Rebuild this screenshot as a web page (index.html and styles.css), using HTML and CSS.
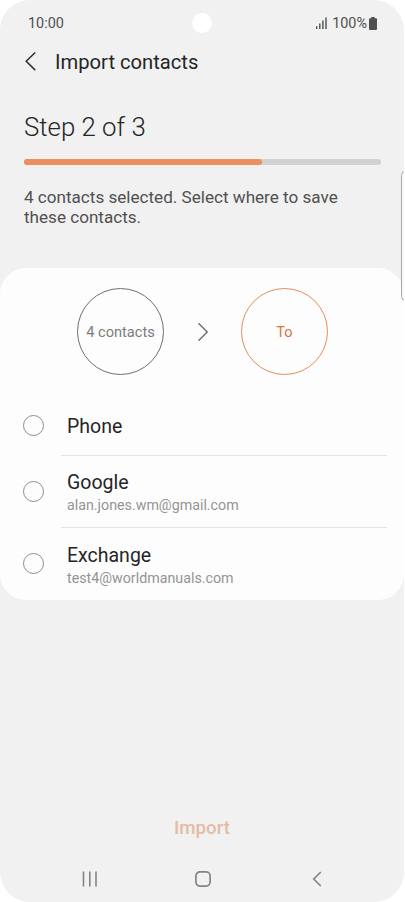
FILE: index.html
```html
<!DOCTYPE html>
<html lang="en">
<head>
    <meta charset="UTF-8">
    <meta name="viewport" content="width=device-width, initial-scale=1.0">
    <title>Import contacts</title>
    <link rel="stylesheet" href="styles.css">
</head>
<body>
    <div class="phone">
        <div class="status-bar">
            <span class="time">10:00</span>
            <span class="camera"></span>
            <div class="status-right">
                <svg class="signal" width="11" height="12" viewBox="0 0 11 12">
                    <path d="M.7 9.300V12M3.800 6.500V12M6.900 3.500V12M10 .5V12" stroke="#505050" stroke-width="1.400"/>
                </svg>
                <span class="percent">100%</span>
                <svg class="battery" width="8" height="13" viewBox="0 0 8 13">
                    <path d="M2.300 0h3.400v1.300H7q1 0 1 1V12q0 1-1 1H1q-1 0-1-1V2.300q0-1 1-1h1.300z" fill="#505050"/>
                </svg>
            </div>
        </div>

        <div class="title-bar">
            <svg width="12" height="20" viewBox="0 0 12 20">
                <path d="M10.200 .5L1.200 9.300l9 8.800" fill="none" stroke="#303030" stroke-width="1.500"/>
            </svg>
            <h1>Import contacts</h1>
        </div>

        <div class="intro">
            <h2>Step 2 of 3</h2>
            <div class="progress"><div class="progress-fill" style="width: 66.667%"></div></div>
            <p>4 contacts selected. Select where to save these contacts.</p>
        </div>

        <div class="card">
            <div class="transfer">
                <div class="circle">4 contacts</div>
                <svg width="11" height="20" viewBox="0 0 11 20">
                    <path d="M1.500 1.300L10.200 10 1.500 18.700" fill="none" stroke="#707070" stroke-width="1.500"/>
                </svg>
                <div class="circle circle-to">To</div>
            </div>
            <div class="option option-phone">
                <span class="radio"></span>
                <div class="option-text">
                    <div class="name">Phone</div>
                </div>
            </div>
            <div class="option">
                <span class="radio"></span>
                <div class="option-text">
                    <div class="name">Google</div>
                    <div class="email">alan.jones.wm@gmail.com</div>
                </div>
            </div>
            <div class="option">
                <span class="radio"></span>
                <div class="option-text">
                    <div class="name">Exchange</div>
                    <div class="email">test4@worldmanuals.com</div>
                </div>
            </div>
        </div>

        <div class="import">Import</div>

        <div class="nav-bar">
            <svg width="16" height="16" viewBox="0 0 16 16">
                <path d="M1.500.5v15M7.800.5v15M14 .5v15" stroke="#848484" stroke-width="1.600"/>
            </svg>
            <svg width="16" height="16" viewBox="0 0 16 16">
                <rect x=".9" y=".9" width="14.200" height="14.200" rx="4" fill="none" stroke="#848484" stroke-width="1.700"/>
            </svg>
            <svg width="16" height="16" viewBox="0 0 16 16">
                <path d="M11.800 1L4.800 8l7 7" fill="none" stroke="#848484" stroke-width="1.700"/>
            </svg>
        </div>

        <div class="edge-handle"></div>
    </div>
</body>
</html>
```

FILE: styles.css
```css
body {
    margin: 0;
    background-color: #fff;
    font-family: Roboto, Arial, sans-serif;
    color: #252525;
}
svg {
    display: block;
    flex: none;
}
h1, h2, p {
    margin: 0;
    font-weight: 400;
}
.phone {
    position: relative;
    display: flex;
    flex-direction: column;
    width: 404px;
    height: 902px;
    background-color: #f1f1f1;
    border-radius: 30px;
    overflow: hidden;
}
.status-bar {
    display: grid;
    grid-template-columns: 164px 20px 1fr;
    align-items: center;
    height: 46px;
    padding: 0 27px 0 28px;
    font-size: 14.4px;
    color: #505050;
}
.camera {
    width: 20px;
    height: 20px;
    border-radius: 50%;
    background-color: #fff;
}
.status-right {
    display: flex;
    align-items: center;
    justify-content: flex-end;
}
.percent {
    margin: 0 2px 0 5px;
}
.title-bar {
    display: flex;
    align-items: center;
    gap: 18px;
    height: 31px;
    padding-left: 25px;
}
.title-bar h1 {
    font-size: 20.2px;
}
.intro {
    height: 191px;
    padding: 0 23px 0 24px;
}
.intro h2 {
    padding-top: 34px;
    font-size: 25.8px;
    font-weight: 300;
    line-height: 32px;
}
.progress {
    height: 6px;
    margin-top: 16px;
    border-radius: 3px;
    background-color: #d1d1d1;
}
.progress-fill {
    height: 6px;
    border-radius: 3px;
    background-color: #eb8f60;
}
.intro p {
    margin-top: 22px;
    width: 330px;
    font-size: 17.1px;
    line-height: 20px;
    color: #505050;
}
.card {
    height: 332px;
    border-radius: 26px;
    background-color: #fdfdfd;
}
.transfer {
    display: flex;
    align-items: center;
    justify-content: center;
    gap: 33px;
    height: 127px;
}
.circle {
    display: flex;
    align-items: center;
    justify-content: center;
    box-sizing: border-box;
    width: 87px;
    height: 87px;
    padding-left: 1px;
    border: 1px solid #707070;
    border-radius: 50%;
    font-size: 14.6px;
    color: #7b7b7b;
}
.circle-to {
    border-color: #e58b60;
    color: #db7440;
}
.option {
    display: flex;
    align-items: center;
    height: 72px;
    padding: 0 17px 0 23px;
}
.option-phone {
    height: 61px;
}
.radio {
    flex: none;
    box-sizing: border-box;
    width: 21px;
    height: 21px;
    margin: 0 17px 1px 0;
    border: 1px solid #8c8c8c;
    border-radius: 50%;
}
.option-text {
    display: flex;
    flex: 1;
    flex-direction: column;
    justify-content: center;
    box-sizing: border-box;
    height: 100%;
    padding: 4px 0 0 6px;
    border-bottom: 1px solid #e5e5e5;
}
.option-phone .option-text {
    padding-top: 3px;
}
.option:last-child .option-text {
    border-bottom: none;
}
.name {
    font-size: 19.5px;
    line-height: 24px;
}
.email {
    font-size: 14.25px;
    line-height: 21px;
    color: #949494;
}
.import {
    margin-top: 213px;
    font-size: 18.7px;
    font-weight: 500;
    line-height: 30px;
    text-align: center;
    color: #e4bca6;
}
.nav-bar {
    display: flex;
    justify-content: center;
    gap: 97.5px;
    margin-top: 28px;
    padding-left: 2px;
}
/* edge panel tab, runs off the right side of the screen */
.edge-handle {
    position: absolute;
    top: 171px;
    right: -6px;
    box-sizing: border-box;
    width: 9px;
    height: 130px;
    border: 1px solid #a8a8a8;
    border-radius: 5px;
    background-color: #f9f9f9;
}
```
